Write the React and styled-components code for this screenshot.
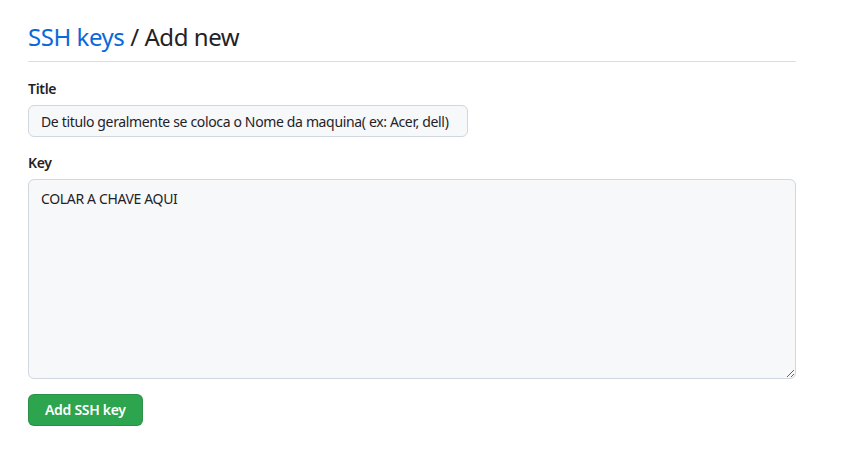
import React from 'react';
import styled, { createGlobalStyle } from 'styled-components';

const GlobalStyle = createGlobalStyle`
  body {
    margin: 0;
    background: #ffffff;
    font-family: "Noto Sans", "Open Sans", "Liberation Sans", sans-serif;
    color: #1f2328;
    letter-spacing: -0.3px;
  }
`;

const Page = styled.div`
  width: 768px;
  padding: 19px 28px 0;
`;

const Subhead = styled.div`
  border-bottom: 1px solid #d8dee4;
  padding-bottom: 6px;
  margin-bottom: 16px;
`;

const Heading = styled.h2`
  margin: 0;
  font-size: 24px;
  font-weight: 400;
  line-height: 36px;
  letter-spacing: -0.45px;
  color: #1f2328;
`;

const Crumb = styled.a`
  color: #0969da;
  text-decoration: none;
`;

const FormGroup = styled.div`
  margin-bottom: 15px;
`;

const Label = styled.label`
  display: block;
  font-size: 14px;
  font-weight: 600;
  line-height: 21px;
  margin-bottom: 6px;
`;

const fieldBase = `
  box-sizing: border-box;
  font-family: inherit;
  font-size: 14px;
  letter-spacing: -0.35px;
  color: #1f2328;
  background: #f6f8fa;
  border: 1px solid #d0d7de;
  border-radius: 6px;
  outline: none;
`;

const TextInput = styled.input`
  ${fieldBase}
  display: block;
  width: 440px;
  height: 32px;
  padding: 5px 12px;
  line-height: 20px;
`;

const TextArea = styled.textarea`
  ${fieldBase}
  display: block;
  width: 100%;
  height: 200px;
  padding: 9px 12px 8px;
  line-height: 20px;
  resize: vertical;
`;

const SubmitButton = styled.button`
  display: inline-block;
  height: 32px;
  padding: 0 16px;
  font-family: inherit;
  font-size: 14px;
  font-weight: 600;
  line-height: 20px;
  letter-spacing: -0.3px;
  color: #ffffff;
  background: #2da44e;
  border: 1px solid rgba(31, 35, 40, 0.15);
  border-radius: 6px;
  cursor: pointer;
`;

const App = () => (
  <>
    <GlobalStyle />
    <Page>
      <Subhead>
        <Heading>
          <Crumb href="#">SSH keys</Crumb> / Add new
        </Heading>
      </Subhead>
      <FormGroup>
        <Label htmlFor="title">Title</Label>
        <TextInput
          id="title"
          defaultValue="De titulo geralmente se coloca o Nome da maquina( ex: Acer, dell)"
        />
      </FormGroup>
      <FormGroup>
        <Label htmlFor="key">Key</Label>
        <TextArea id="key" defaultValue="COLAR A CHAVE AQUI" />
      </FormGroup>
      <SubmitButton type="submit">Add SSH key</SubmitButton>
    </Page>
  </>
);

export default App;
